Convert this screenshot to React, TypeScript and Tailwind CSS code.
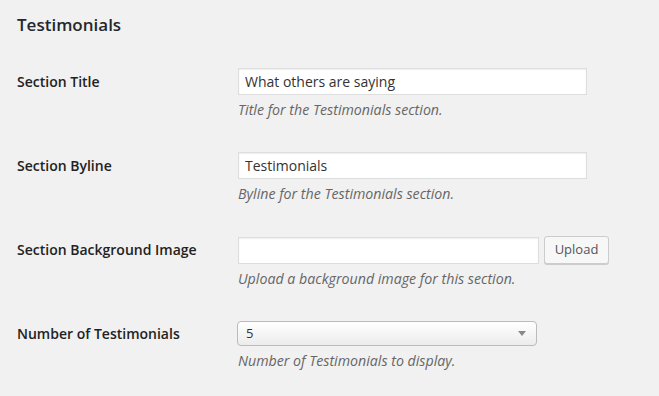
export default function App() {
  const font = { fontFamily: '"Open Sans", "Noto Sans", sans-serif' };
  return (
    <div className="min-h-[396px] w-[659px] bg-[#f1f1f1] pl-[17px] text-[#222]" style={font}>
      <h3 className="pt-[13px] text-[17px] font-semibold leading-[24px] text-[#23282d]">Testimonials</h3>
      <div className="mt-[16px]">
        <div className="flex h-[84px] pt-[15px]">
          <div className="w-[221px] text-[14px] font-semibold leading-[27px]">Section Title</div>
          <div>
            <input
              readOnly
              value="What others are saying"
              className="h-[27px] w-[349px] border border-[#ddd] bg-white px-[6px] text-[14px] text-[#333] shadow-[inset_0_1px_2px_rgba(0,0,0,0.07)] outline-none"
            />
            <p className="mt-[5px] text-[14.2px] italic leading-[20px] text-[#666]">Title for the Testimonials section.</p>
          </div>
        </div>
        <div className="flex h-[84px] pt-[15px]">
          <div className="w-[221px] text-[14px] font-semibold leading-[27px]">Section Byline</div>
          <div>
            <input
              readOnly
              value="Testimonials"
              className="h-[27px] w-[349px] border border-[#ddd] bg-white px-[6px] text-[14px] text-[#333] shadow-[inset_0_1px_2px_rgba(0,0,0,0.07)] outline-none"
            />
            <p className="mt-[5px] text-[14.2px] italic leading-[20px] text-[#666]">Byline for the Testimonials section.</p>
          </div>
        </div>
        <div className="flex h-[84px] pt-[15px]">
          <div className="w-[221px] text-[14px] font-semibold leading-[27px]">Section Background Image</div>
          <div>
            <div className="flex items-center gap-[5px]">
              <input
                readOnly
                value=""
                className="h-[27px] w-[301px] border border-[#ddd] bg-white px-[6px] text-[14px] shadow-[inset_0_1px_2px_rgba(0,0,0,0.07)] outline-none"
              />
              <button className="h-[28px] w-[65px] rounded-[3px] border border-[#ccc] bg-[#f7f7f7] text-[13px] text-[#555] shadow-[0_1px_0_#ccc]">
                Upload
              </button>
            </div>
            <p className="mt-[5px] text-[14.2px] italic leading-[20px] text-[#666]">Upload a background image for this section.</p>
          </div>
        </div>
        <div className="flex h-[84px] pt-[15px]">
          <div className="w-[221px] text-[14px] font-semibold leading-[27px]">Number of Testimonials</div>
          <div className="-ml-px">
            <div className="mt-px flex h-[25px] w-[300px] items-center justify-between rounded-[4px] border border-[#bbb] bg-gradient-to-b from-white to-[#ececec] pl-[8px] pr-[10px] text-[13px] text-[#333]">
              <span>5</span>
              <svg width="8" height="5" viewBox="0 0 8 5">
                <path d="M0 0h8L4 5z" fill="#888" />
              </svg>
            </div>
            <p className="mt-[5px] pl-px text-[14.2px] italic leading-[20px] text-[#666]">Number of Testimonials to display.</p>
          </div>
        </div>
      </div>
    </div>
  );
}
